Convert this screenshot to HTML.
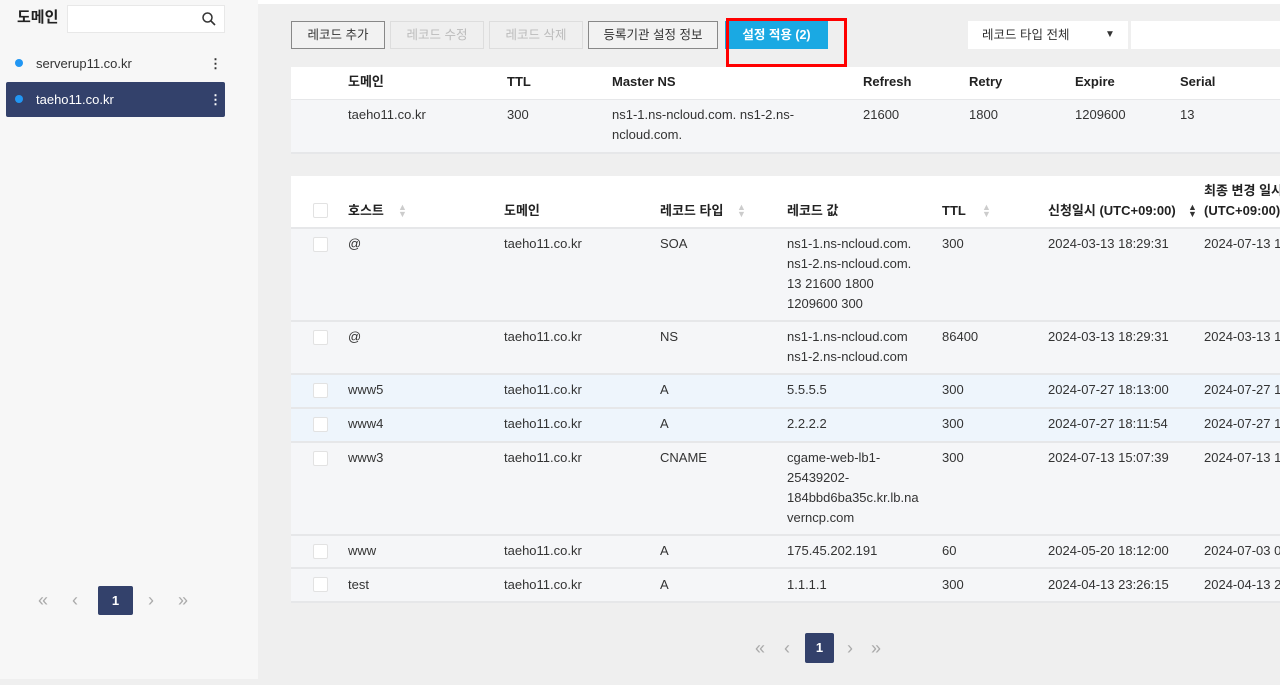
<!DOCTYPE html>
<html><head><meta charset="utf-8"><style>
*{box-sizing:border-box;margin:0;padding:0}
body{width:1280px;height:685px;overflow:hidden;background:#efefef;font-family:"Liberation Sans","Noto Sans CJK KR",sans-serif;font-size:13px;color:#333;position:relative}
.a{position:absolute;line-height:20px}
.side{left:0;top:0;width:258px;height:679px;background:#f7f7f7}
.btn{top:21px;height:28px;border:1px solid #888;background:#f2f2f2;font-size:12.5px;text-align:center;line-height:26px;color:#333}
.btn.dis{border-color:#ddd;color:#bbb;background:#efefef}
.row{left:291px;width:989px;background:#f5f6f8;border-bottom:2px solid #e6e7e9}
.row .a{line-height:20px}
.cb{width:15px;height:15px;background:#fff;border:1px solid #e2e2e2;border-radius:2px}
.h{font-weight:bold;color:#222}
.sort{color:#ccc;font-size:9px;line-height:7px}
.pg{color:#aaa;font-size:18px;font-weight:300}
.pbox{background:#33416b;color:#fff;font-weight:bold;text-align:center;border-radius:2px}
</style></head><body>
<div class="a side"></div>
<div class="a" style="left:258px;top:0;width:1022px;height:4px;background:#fff"></div>
<div class="a h" style="left:17px;top:8px;font-size:15px">도메인</div>
<div class="a" style="left:67px;top:5px;width:158px;height:28px;background:#fff;border:1px solid #e8e8e8"></div>
<svg class="a" style="left:201px;top:11px" width="16" height="16" viewBox="0 0 16 16"><circle cx="6.5" cy="6.5" r="4.5" fill="none" stroke="#333" stroke-width="1.5"/><path d="M10 10l4 4" stroke="#333" stroke-width="1.6"/></svg>
<div class="a" style="left:15px;top:59px;width:8px;height:8px;border-radius:50%;background:#2196f3"></div>
<div class="a" style="left:36px;top:54px;font-size:13px;color:#333">serverup11.co.kr</div>
<div class="a" style="left:209px;top:54px;font-weight:bold">⋮</div>
<div class="a" style="left:6px;top:82px;width:219px;height:35px;background:#33416b;border-radius:2px"></div>
<div class="a" style="left:15px;top:95px;width:8px;height:8px;border-radius:50%;background:#2196f3"></div>
<div class="a" style="left:36px;top:90px;color:#fff">taeho11.co.kr</div>
<div class="a" style="left:209px;top:90px;color:#fff;font-weight:bold">⋮</div>
<div class="a pg" style="left:38px;top:590px">«</div>
<div class="a pg" style="left:72px;top:590px">‹</div>
<div class="a pbox" style="left:98px;top:586px;width:35px;height:29px;line-height:29px">1</div>
<div class="a pg" style="left:148px;top:590px">›</div>
<div class="a pg" style="left:178px;top:590px">»</div>

<div class="a btn" style="left:291px;width:94px">레코드 추가</div>
<div class="a btn dis" style="left:390px;width:94px">레코드 수정</div>
<div class="a btn dis" style="left:489px;width:94px">레코드 삭제</div>
<div class="a btn" style="left:588px;width:130px">등록기관 설정 정보</div>
<div class="a" style="left:725px;top:21px;width:103px;height:28px;background:#1aa9e3;color:#fff;font-weight:bold;font-size:12.5px;text-align:center;line-height:28px">설정 적용 (2)</div>
<div class="a" style="left:726px;top:18px;width:121px;height:49px;border:3px solid #f00"></div>
<div class="a" style="left:968px;top:21px;width:160px;height:28px;background:#fff;font-size:12.5px;line-height:28px;padding-left:14px">레코드 타입 전체<span class="a" style="left:137px;top:4px;font-size:10px">▼</span></div>
<div class="a" style="left:1131px;top:21px;width:149px;height:28px;background:#fff"></div>

<div class="a" style="left:291px;top:67px;width:989px;height:33px;background:#fff;border-bottom:1px solid #e6e7e9"></div>
<div class="a h" style="left:348px;top:72px">도메인</div>
<div class="a h" style="left:507px;top:72px">TTL</div>
<div class="a h" style="left:612px;top:72px">Master NS</div>
<div class="a h" style="left:863px;top:72px">Refresh</div>
<div class="a h" style="left:969px;top:72px">Retry</div>
<div class="a h" style="left:1075px;top:72px">Expire</div>
<div class="a h" style="left:1180px;top:72px">Serial</div>
<div class="a row" style="top:100px;height:54px">
<div class="a" style="left:57px;top:5px">taeho11.co.kr</div>
<div class="a" style="left:216px;top:5px">300</div>
<div class="a" style="left:321px;top:5px;width:200px">ns1-1.ns-ncloud.com. ns1-2.ns-<br>ncloud.com.</div>
<div class="a" style="left:572px;top:5px">21600</div>
<div class="a" style="left:678px;top:5px">1800</div>
<div class="a" style="left:784px;top:5px">1209600</div>
<div class="a" style="left:889px;top:5px">13</div>
</div>

<div class="a" style="left:291px;top:176px;width:989px;height:53px;background:#fff;border-bottom:2px solid #e6e7e9"></div>
<div class="a cb" style="left:313px;top:203px"></div>
<div class="a h" style="left:348px;top:201px">호스트</div><div class="a sort" style="left:398px;top:204px">▲<br>▼</div>
<div class="a h" style="left:504px;top:201px">도메인</div>
<div class="a h" style="left:660px;top:201px">레코드 타입</div><div class="a sort" style="left:737px;top:204px">▲<br>▼</div>
<div class="a h" style="left:787px;top:201px">레코드 값</div>
<div class="a h" style="left:942px;top:201px">TTL</div><div class="a sort" style="left:982px;top:204px">▲<br>▼</div>
<div class="a h" style="left:1048px;top:201px">신청일시 (UTC+09:00)</div><div class="a sort" style="left:1188px;top:204px;color:#333">▲<br>▼</div>
<div class="a h" style="left:1204px;top:181px;line-height:20px;white-space:nowrap">최종 변경 일시<br>(UTC+09:00)</div>

<div class="a row" style="top:229px;height:93px">
<div class="a cb" style="left:22px;top:8px"></div><div class="a" style="left:57px;top:5px">@</div><div class="a" style="left:213px;top:5px">taeho11.co.kr</div><div class="a" style="left:369px;top:5px">SOA</div>
<div class="a" style="left:496px;top:5px">ns1-1.ns-ncloud.com.<br>ns1-2.ns-ncloud.com.<br>13 21600 1800<br>1209600 300</div>
<div class="a" style="left:651px;top:5px">300</div><div class="a" style="left:757px;top:5px">2024-03-13 18:29:31</div><div class="a" style="left:913px;top:5px;white-space:nowrap">2024-07-13 1</div></div>
<div class="a row" style="top:322px;height:53px">
<div class="a cb" style="left:22px;top:8px"></div><div class="a" style="left:57px;top:5px">@</div><div class="a" style="left:213px;top:5px">taeho11.co.kr</div><div class="a" style="left:369px;top:5px">NS</div>
<div class="a" style="left:496px;top:5px">ns1-1.ns-ncloud.com<br>ns1-2.ns-ncloud.com</div>
<div class="a" style="left:651px;top:5px">86400</div><div class="a" style="left:757px;top:5px">2024-03-13 18:29:31</div><div class="a" style="left:913px;top:5px;white-space:nowrap">2024-03-13 1</div></div>
<div class="a row" style="top:375px;height:34px;background:#eef5fc">
<div class="a cb" style="left:22px;top:8px"></div><div class="a" style="left:57px;top:5px">www5</div><div class="a" style="left:213px;top:5px">taeho11.co.kr</div><div class="a" style="left:369px;top:5px">A</div>
<div class="a" style="left:496px;top:5px">5.5.5.5</div>
<div class="a" style="left:651px;top:5px">300</div><div class="a" style="left:757px;top:5px">2024-07-27 18:13:00</div><div class="a" style="left:913px;top:5px;white-space:nowrap">2024-07-27 1</div></div>
<div class="a row" style="top:409px;height:34px;background:#eef5fc">
<div class="a cb" style="left:22px;top:8px"></div><div class="a" style="left:57px;top:5px">www4</div><div class="a" style="left:213px;top:5px">taeho11.co.kr</div><div class="a" style="left:369px;top:5px">A</div>
<div class="a" style="left:496px;top:5px">2.2.2.2</div>
<div class="a" style="left:651px;top:5px">300</div><div class="a" style="left:757px;top:5px">2024-07-27 18:11:54</div><div class="a" style="left:913px;top:5px;white-space:nowrap">2024-07-27 1</div></div>
<div class="a row" style="top:443px;height:93px">
<div class="a cb" style="left:22px;top:8px"></div><div class="a" style="left:57px;top:5px">www3</div><div class="a" style="left:213px;top:5px">taeho11.co.kr</div><div class="a" style="left:369px;top:5px">CNAME</div>
<div class="a" style="left:496px;top:5px">cgame-web-lb1-<br>25439202-<br>184bbd6ba35c.kr.lb.na<br>verncp.com</div>
<div class="a" style="left:651px;top:5px">300</div><div class="a" style="left:757px;top:5px">2024-07-13 15:07:39</div><div class="a" style="left:913px;top:5px;white-space:nowrap">2024-07-13 1</div></div>
<div class="a row" style="top:536px;height:33px">
<div class="a cb" style="left:22px;top:8px"></div><div class="a" style="left:57px;top:5px">www</div><div class="a" style="left:213px;top:5px">taeho11.co.kr</div><div class="a" style="left:369px;top:5px">A</div>
<div class="a" style="left:496px;top:5px">175.45.202.191</div>
<div class="a" style="left:651px;top:5px">60</div><div class="a" style="left:757px;top:5px">2024-05-20 18:12:00</div><div class="a" style="left:913px;top:5px;white-space:nowrap">2024-07-03 0</div></div>
<div class="a row" style="top:569px;height:34px">
<div class="a cb" style="left:22px;top:8px"></div><div class="a" style="left:57px;top:6px">test</div><div class="a" style="left:213px;top:6px">taeho11.co.kr</div><div class="a" style="left:369px;top:6px">A</div>
<div class="a" style="left:496px;top:6px">1.1.1.1</div>
<div class="a" style="left:651px;top:6px">300</div><div class="a" style="left:757px;top:6px">2024-04-13 23:26:15</div><div class="a" style="left:913px;top:6px;white-space:nowrap">2024-04-13 2</div></div>

<div class="a pg" style="left:755px;top:638px">«</div>
<div class="a pg" style="left:784px;top:638px">‹</div>
<div class="a pbox" style="left:805px;top:633px;width:29px;height:30px;line-height:30px">1</div>
<div class="a pg" style="left:847px;top:638px">›</div>
<div class="a pg" style="left:871px;top:638px">»</div>
</body></html>
